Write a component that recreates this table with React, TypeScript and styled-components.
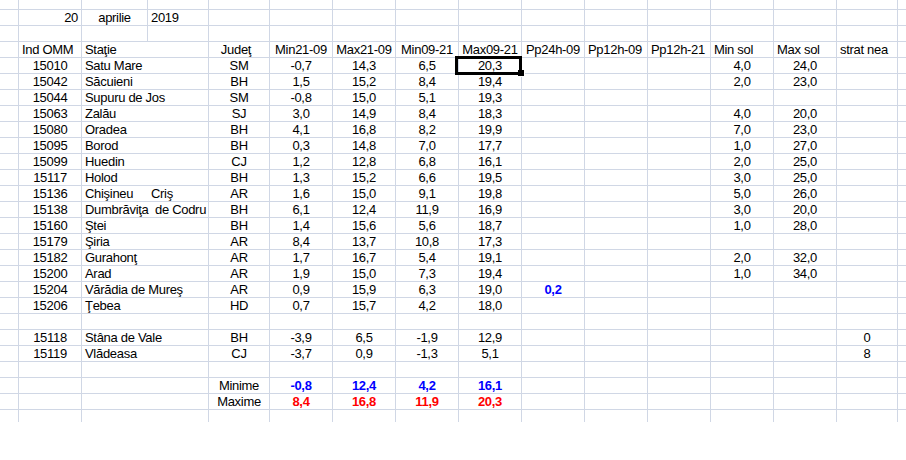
import React from "react";
import styled, { createGlobalStyle } from "styled-components";

const GlobalStyle = createGlobalStyle`
  html, body { margin: 0; padding: 0; background: #ffffff; }
  body { font-family: "Liberation Sans", Arial, sans-serif; }
`;

const LINE = "#d0d7e5";
const COLS = 16;

const Sheet = styled.div`
  position: relative;
  width: 906px;
  display: grid;
  grid-template-columns: 19px 63px 66px 61px 61px repeat(9, 63px) 61px 1fr;
  grid-template-rows: 10px repeat(25, 16px) 12px;
  font-family: "Liberation Sans", Arial, sans-serif;
  font-size: 13px;
  letter-spacing: -0.3px;
  color: #000000;
`;

type Align = "left" | "center" | "right";
type Tone = "blue" | "red";

const Cell = styled.div<{
  $align?: Align;
  $tone?: Tone;
  $span?: number;
  $last?: boolean;
  $bottom?: boolean;
  $padL?: number;
  $padR?: number;
}>`
  box-sizing: border-box;
  min-width: 0;
  grid-column: span ${(p) => p.$span ?? 1};
  border-right: ${(p) => (p.$last ? "none" : `1px solid ${LINE}`)};
  border-bottom: ${(p) => (p.$bottom ? "none" : `1px solid ${LINE}`)};
  line-height: 15px;
  white-space: pre;
  overflow: visible;
  text-align: ${(p) => p.$align ?? "left"};
  padding: 0 ${(p) => p.$padR ?? 3}px 0 ${(p) => p.$padL ?? 3}px;
  color: ${(p) => (p.$tone === "blue" ? "#0000ff" : p.$tone === "red" ? "#ff0000" : "#000000")};
  font-weight: ${(p) => (p.$tone ? 700 : 400)};
`;

const StationCell = styled.div`
  box-sizing: border-box;
  grid-column: span 2;
  display: grid;
  grid-template-columns: 66px 1fr;
  border-right: 1px solid ${LINE};
  border-bottom: 1px solid ${LINE};
  line-height: 15px;
  white-space: pre;
`;

const NamePart = styled.span<{ $pad: number }>`
  padding-left: ${(p) => p.$pad}px;
  overflow: visible;
`;

const Selection = styled.div`
  position: absolute;
  left: 455px;
  top: 56px;
  width: 67px;
  height: 19px;
  box-sizing: border-box;
  border: 3px solid #000000;
  pointer-events: none;
`;

const Handle = styled.div`
  position: absolute;
  left: 518px;
  top: 70px;
  width: 7px;
  height: 7px;
  box-sizing: border-box;
  background: #000000;
  border: 1px solid #ffffff;
  border-top: none;
  border-left: none;
`;

type Spec = {
  text?: string;
  align?: Align;
  tone?: Tone;
  span?: number;
  padL?: number;
  padR?: number;
};

type Station = {
  id: string;
  name: string;
  name2?: string;
  name2Pad?: number;
  county: string;
  vals: [string, string, string, string];
  pp24?: string;
  minSol?: string;
  maxSol?: string;
  snow?: string;
};

const stations: Station[] = [
  { id: "15010", name: "Satu Mare", county: "SM", vals: ["-0,7", "14,3", "6,5", "20,3"], minSol: "4,0", maxSol: "24,0" },
  { id: "15042", name: "Săcuieni", county: "BH", vals: ["1,5", "15,2", "8,4", "19,4"], minSol: "2,0", maxSol: "23,0" },
  { id: "15044", name: "Supuru de Jos", county: "SM", vals: ["-0,8", "15,0", "5,1", "19,3"] },
  { id: "15063", name: "Zalău", county: "SJ", vals: ["3,0", "14,9", "8,4", "18,3"], minSol: "4,0", maxSol: "20,0" },
  { id: "15080", name: "Oradea", county: "BH", vals: ["4,1", "16,8", "8,2", "19,9"], minSol: "7,0", maxSol: "23,0" },
  { id: "15095", name: "Borod", county: "BH", vals: ["0,3", "14,8", "7,0", "17,7"], minSol: "1,0", maxSol: "27,0" },
  { id: "15099", name: "Huedin", county: "CJ", vals: ["1,2", "12,8", "6,8", "16,1"], minSol: "2,0", maxSol: "25,0" },
  { id: "15117", name: "Holod", county: "BH", vals: ["1,3", "15,2", "6,6", "19,5"], minSol: "3,0", maxSol: "25,0" },
  { id: "15136", name: "Chişineu", name2: "Criş", name2Pad: 3, county: "AR", vals: ["1,6", "15,0", "9,1", "19,8"], minSol: "5,0", maxSol: "26,0" },
  { id: "15138", name: "Dumbrăviţa", name2: "de Codru", name2Pad: 7, county: "BH", vals: ["6,1", "12,4", "11,9", "16,9"], minSol: "3,0", maxSol: "20,0" },
  { id: "15160", name: "Ştei", county: "BH", vals: ["1,4", "15,6", "5,6", "18,7"], minSol: "1,0", maxSol: "28,0" },
  { id: "15179", name: "Şiria", county: "AR", vals: ["8,4", "13,7", "10,8", "17,3"] },
  { id: "15182", name: "Gurahonţ", county: "AR", vals: ["1,7", "16,7", "5,4", "19,1"], minSol: "2,0", maxSol: "32,0" },
  { id: "15200", name: "Arad", county: "AR", vals: ["1,9", "15,0", "7,3", "19,4"], minSol: "1,0", maxSol: "34,0" },
  { id: "15204", name: "Vărădia de Mureş", county: "AR", vals: ["0,9", "15,9", "6,3", "19,0"], pp24: "0,2" },
  { id: "15206", name: "Ţebea", county: "HD", vals: ["0,7", "15,7", "4,2", "18,0"] },
];

const mountain: Station[] = [
  { id: "15118", name: "Stâna de Vale", county: "BH", vals: ["-3,9", "6,5", "-1,9", "12,9"], snow: "0" },
  { id: "15119", name: "Vlădeasa", county: "CJ", vals: ["-3,7", "0,9", "-1,3", "5,1"], snow: "8" },
];

const headers = [
  "Min21-09", "Max21-09", "Min09-21", "Max09-21", "Pp24h-09",
  "Pp12h-09", "Pp12h-21", "Min sol", "Max sol", "strat nea",
];

let keySeq = 0;
const nextKey = () => `c${keySeq++}`;

function plainRow(specs: Spec[], bottom = false): React.ReactNode[] {
  const out: React.ReactNode[] = [];
  let col = 0;
  let i = 0;
  while (col < COLS) {
    const s = specs[i] ?? {};
    const span = s.span ?? 1;
    out.push(
      <Cell
        key={nextKey()}
        $align={s.align}
        $tone={s.tone}
        $span={span}
        $padL={s.padL}
        $padR={s.padR}
        $last={col + span >= COLS}
        $bottom={bottom}
      >
        {s.text ?? ""}
      </Cell>
    );
    col += span;
    i += 1;
  }
  return out;
}

function blankMergedRow(bottom = false) {
  const specs: Spec[] = [{}, {}, { span: 2 }];
  return plainRow(specs, bottom);
}

function stationRow(s: Station): React.ReactNode[] {
  const out: React.ReactNode[] = [];
  out.push(<Cell key={nextKey()} />);
  out.push(<Cell key={nextKey()} $align="center">{s.id}</Cell>);
  out.push(
    <StationCell key={nextKey()}>
      <NamePart $pad={3}>{s.name}</NamePart>
      {s.name2 ? <NamePart $pad={s.name2Pad ?? 3}>{s.name2}</NamePart> : null}
    </StationCell>
  );
  out.push(<Cell key={nextKey()} $align="center">{s.county}</Cell>);
  s.vals.forEach((v) => out.push(<Cell key={nextKey()} $align="center">{v}</Cell>));
  out.push(<Cell key={nextKey()} $align="center" $tone={s.pp24 ? "blue" : undefined}>{s.pp24 ?? ""}</Cell>);
  out.push(<Cell key={nextKey()} />);
  out.push(<Cell key={nextKey()} />);
  out.push(<Cell key={nextKey()} $align="center">{s.minSol ?? ""}</Cell>);
  out.push(<Cell key={nextKey()} $align="center">{s.maxSol ?? ""}</Cell>);
  out.push(<Cell key={nextKey()} $align="center">{s.snow ?? ""}</Cell>);
  out.push(<Cell key={nextKey()} $last />);
  return out;
}

function summaryRow(label: string, values: string[], tone: Tone) {
  const specs: Spec[] = [
    {}, {}, { span: 2 },
    { text: label, align: "center" },
    ...values.map((v) => ({ text: v, align: "center" as Align, tone })),
  ];
  return plainRow(specs);
}

export default function App() {
  keySeq = 0;
  const headerSpecs: Spec[] = [
    {},
    { text: "Ind OMM" },
    { text: "Staţie", span: 2 },
    { text: "Judeţ", align: "center", padR: 9 },
    ...headers.map((h, i) => ({ text: h, align: (i < 5 ? "center" : "left") as Align })),
  ];

  return (
    <>
      <GlobalStyle />
      <Sheet>
        {plainRow([])}
        {plainRow([{}, { text: "20", align: "right" }, { text: "aprilie", align: "center" }, { text: "2019" }])}
        {plainRow([])}
        {plainRow(headerSpecs)}
        {stations.map((s) => stationRow(s))}
        {blankMergedRow()}
        {mountain.map((s) => stationRow(s))}
        {blankMergedRow()}
        {summaryRow("Minime", ["-0,8", "12,4", "4,2", "16,1"], "blue")}
        {summaryRow("Maxime", ["8,4", "16,8", "11,9", "20,3"], "red")}
        {blankMergedRow(true)}
        <Selection />
        <Handle />
      </Sheet>
    </>
  );
}
